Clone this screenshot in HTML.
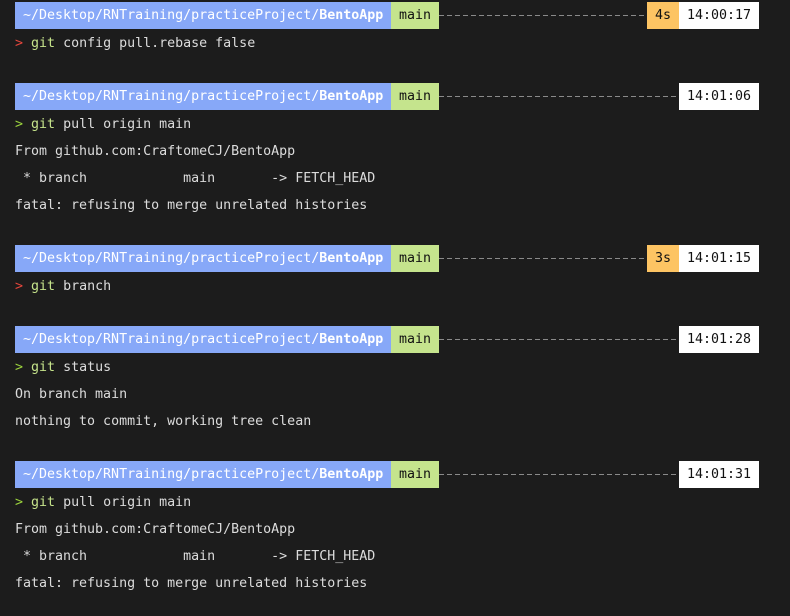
<!DOCTYPE html>
<html><head><style>
body{margin:0;background:#1c1c1c;width:790px;height:616px;overflow:hidden;font-family:"DejaVu Sans Mono","Liberation Mono",monospace;font-size:13.3px;color:#dcdcdc}
.l{position:absolute;left:15px;height:27px;line-height:29px;white-space:pre}
.bar{position:absolute;left:15px;width:744px;height:27px;line-height:27px;white-space:pre}
.bar span{position:absolute;top:0;height:27px;padding:0 8px;color:#111}
.p{left:0;width:360px;background:#87a8f8;color:#fff!important}
.m{left:376px;width:32px;background:#c5e48d}
.d{position:absolute;left:424px;top:13px;height:1px;background:repeating-linear-gradient(90deg,#8a8a8a 0 5px,transparent 5px 8px)}
.s{background:#fdc463;width:16px}
.t{left:664px;width:64px;background:#fff}
.r{color:#e5463c}.g{color:#9bd33d}.gi{color:#c6e48b}
</style></head><body>
<div class="bar" style="top:2px"><span class="p">~/Desktop/RNTraining/practiceProject/<b>BentoApp</b></span><span class="m">main</span><div class="d" style="width:208px"></div><span class="s" style="left:632px">4s</span><span class="t">14:00:17</span></div>
<div class="l" style="top:29px"><span class="r">&gt;</span> <span class="gi">git</span> config pull.rebase false</div>

<div class="bar" style="top:83px"><span class="p">~/Desktop/RNTraining/practiceProject/<b>BentoApp</b></span><span class="m">main</span><div class="d" style="width:240px"></div><span class="t">14:01:06</span></div>
<div class="l" style="top:110px"><span class="g">&gt;</span> <span class="gi">git</span> pull origin main</div>
<div class="l" style="top:137px">From github.com:CraftomeCJ/BentoApp</div>
<div class="l" style="top:164px"> * branch            main       -&gt; FETCH_HEAD</div>
<div class="l" style="top:191px">fatal: refusing to merge unrelated histories</div>

<div class="bar" style="top:245px"><span class="p">~/Desktop/RNTraining/practiceProject/<b>BentoApp</b></span><span class="m">main</span><div class="d" style="width:208px"></div><span class="s" style="left:632px">3s</span><span class="t">14:01:15</span></div>
<div class="l" style="top:272px"><span class="r">&gt;</span> <span class="gi">git</span> branch</div>

<div class="bar" style="top:326px"><span class="p">~/Desktop/RNTraining/practiceProject/<b>BentoApp</b></span><span class="m">main</span><div class="d" style="width:240px"></div><span class="t">14:01:28</span></div>
<div class="l" style="top:353px"><span class="g">&gt;</span> <span class="gi">git</span> status</div>
<div class="l" style="top:380px">On branch main</div>
<div class="l" style="top:407px">nothing to commit, working tree clean</div>

<div class="bar" style="top:461px"><span class="p">~/Desktop/RNTraining/practiceProject/<b>BentoApp</b></span><span class="m">main</span><div class="d" style="width:240px"></div><span class="t">14:01:31</span></div>
<div class="l" style="top:488px"><span class="g">&gt;</span> <span class="gi">git</span> pull origin main</div>
<div class="l" style="top:515px">From github.com:CraftomeCJ/BentoApp</div>
<div class="l" style="top:542px"> * branch            main       -&gt; FETCH_HEAD</div>
<div class="l" style="top:569px">fatal: refusing to merge unrelated histories</div>
</body></html>
